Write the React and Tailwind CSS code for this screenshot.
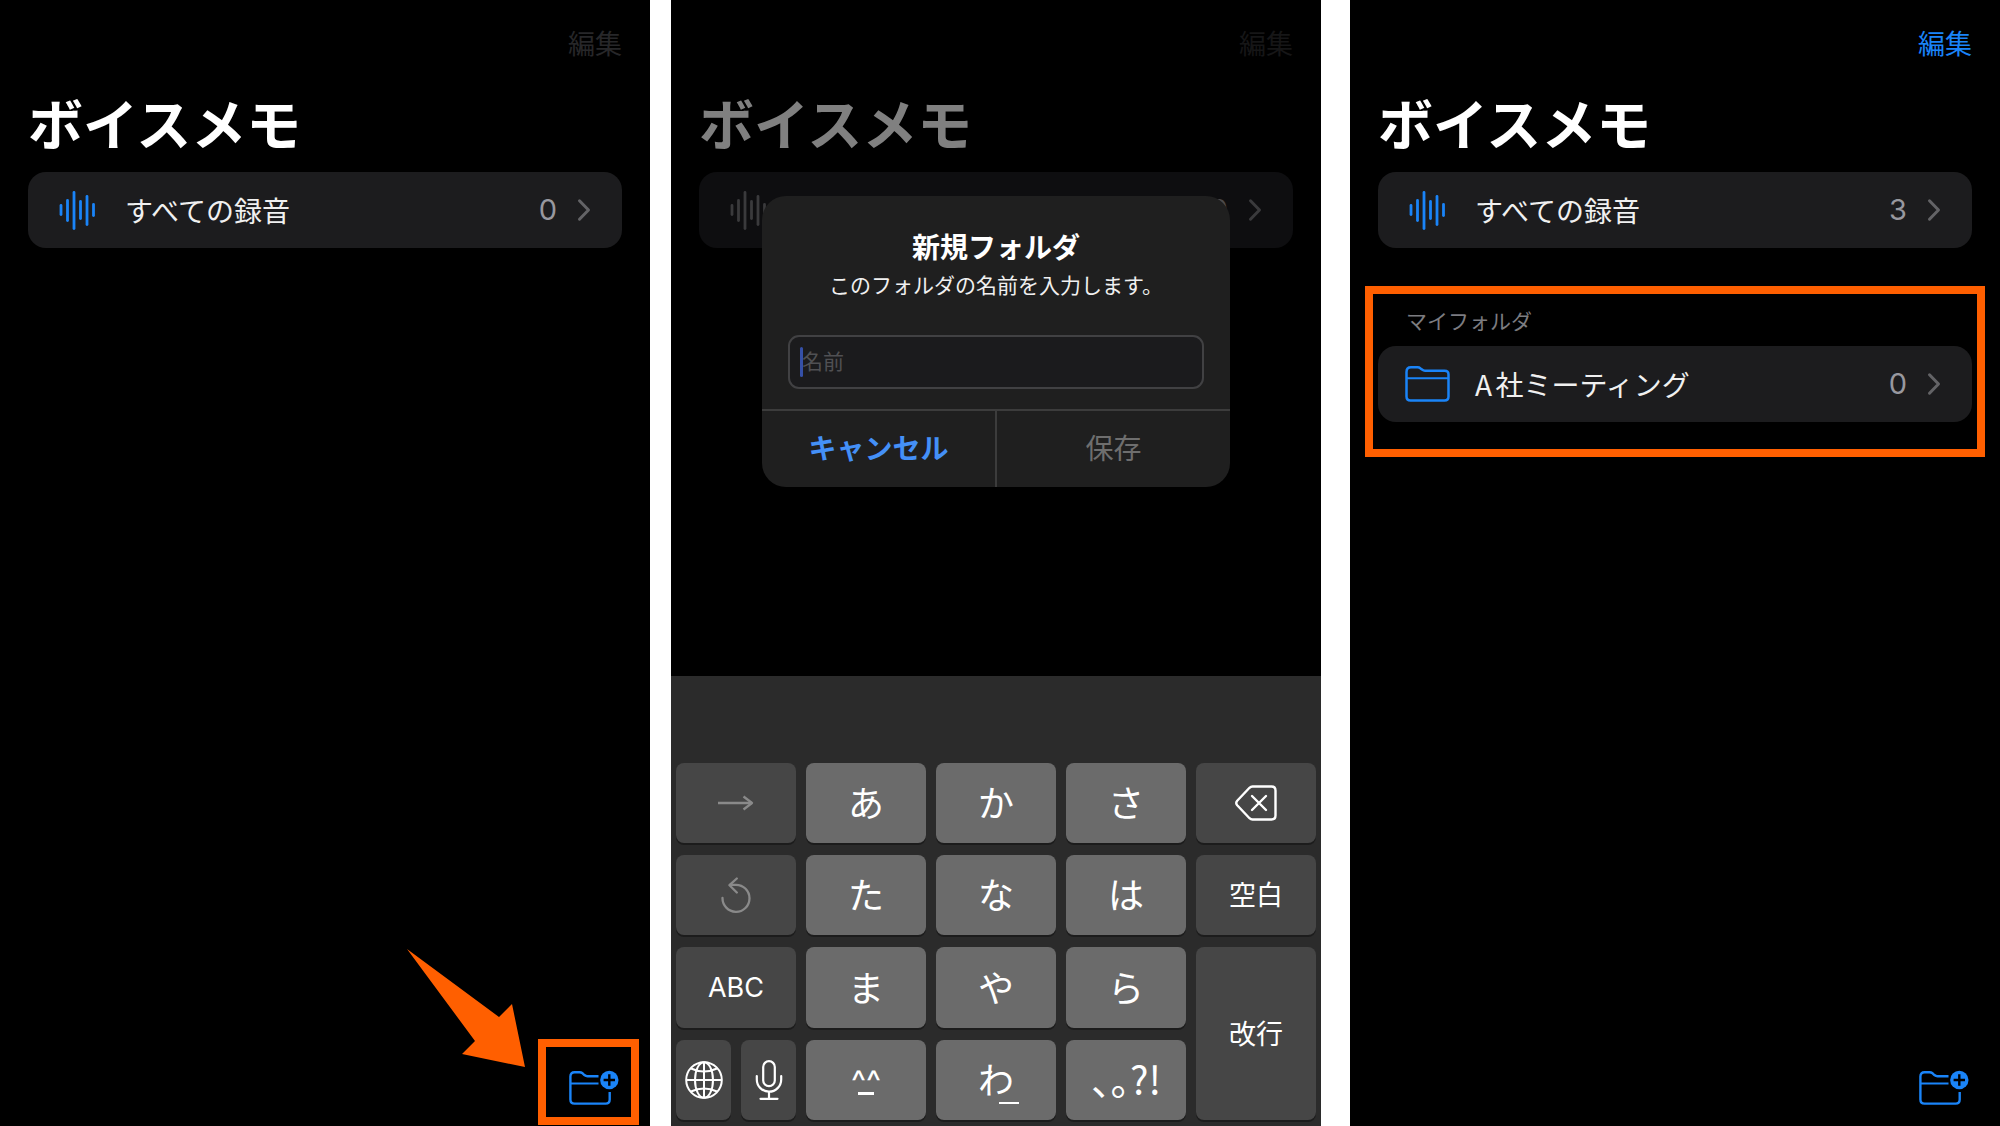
import { useState } from "react";

const WAVE_BARS = [
    { x: 2, top: 15, bottom: 24 },
    { x: 8.5, top: 10, bottom: 30 },
    { x: 15, top: 2, bottom: 38 },
    { x: 21.5, top: 11, bottom: 28 },
    { x: 28, top: 6, bottom: 34 },
    { x: 34.5, top: 14, bottom: 25 },
];

function WaveIcon({ className }) {
    return (
        <svg
            width="36"
            height="40"
            viewBox="0 0 36 39"
            fill="none"
            stroke="currentColor"
            strokeWidth="2.8"
            strokeLinecap="round"
            className={className}
        >
            {WAVE_BARS.map((bar) => (
                <path key={bar.x} d={`M${bar.x} ${bar.top}V${bar.bottom}`} />
            ))}
        </svg>
    );
}

function FolderIcon() {
    return (
        <svg
            width="45"
            height="36"
            viewBox="0 0 45 36"
            fill="none"
            stroke="currentColor"
            strokeWidth="2.5"
            strokeLinejoin="round"
        >
            <path d="M1.5 6V30.5Q1.5 34.5 5.5 34.5H39.5Q43.5 34.5 43.5 30.5V8.5Q43.5 4.8 39.5 4.8H20Q18.5 4.8 17 3.6L15.5 2.4Q14.3 1.3 12.5 1.3H6Q1.5 1.3 1.5 6Z" />
            <path d="M1.5 12.3H43.5" strokeWidth="2" />
        </svg>
    );
}

function FolderPlusIcon() {
    return (
        <svg
            width="50"
            height="36"
            viewBox="0 0 50 36"
            fill="none"
            stroke="currentColor"
            strokeWidth="2.4"
        >
            <path d="M29.5 6.2H18.5Q16.8 6.2 15.4 5L13.6 3.3Q12.2 2.2 10.4 2.2H5.6Q1.4 2.2 1.4 6.4V29.5Q1.4 33.6 5.5 33.6H36.6Q40.7 33.6 40.7 29.5V22" />
            <path d="M1.4 13.5H29.5" strokeWidth="2" />
            <circle cx="40.3" cy="10" r="9.2" fill="currentColor" stroke="none" />
            <path d="M40.3 4.3V15.7M34.6 10H46" stroke="#000" strokeWidth="2.4" />
        </svg>
    );
}

function ChevronIcon() {
    return (
        <svg
            width="14"
            height="24"
            viewBox="0 0 14 24"
            fill="none"
            stroke="currentColor"
            strokeWidth="3"
            strokeLinecap="round"
            strokeLinejoin="round"
        >
            <path d="M2.5 2.8L11.5 12L2.5 21.2" />
        </svg>
    );
}

function ArrowIcon() {
    return (
        <svg width="36" height="16" viewBox="0 0 36 16" fill="none" stroke="currentColor" strokeWidth="2.3">
            <path d="M0 8H34" />
            <path d="M25.5 1.5L34 8L25.5 14.5" strokeLinejoin="round" />
        </svg>
    );
}

function UndoIcon() {
    return (
        <svg
            width="30"
            height="36"
            viewBox="0 0 30 36"
            fill="none"
            stroke="currentColor"
            strokeWidth="2.3"
            strokeLinecap="round"
            strokeLinejoin="round"
        >
            <path d="M1.5 21A13.5 13.5 0 1 0 15 7.8H9" />
            <path d="M15.8 1.5L8.5 8.2L15.8 15.5" />
        </svg>
    );
}

function BackspaceIcon() {
    return (
        <svg
            width="42"
            height="36"
            viewBox="0 0 42 36"
            fill="none"
            stroke="currentColor"
            strokeWidth="2.4"
            strokeLinecap="round"
            strokeLinejoin="round"
        >
            <path d="M17.5 1.5H36.5Q40.5 1.5 40.5 5.5V30.5Q40.5 34.5 36.5 34.5H17.5Q15.8 34.5 14.5 33.2L2.2 20.2Q0.3 18 2.2 15.8L14.5 2.8Q15.8 1.5 17.5 1.5Z" />
            <path d="M17 11L31 25M31 11L17 25" />
        </svg>
    );
}

function GlobeIcon() {
    return (
        <svg width="38" height="38" viewBox="0 0 38 38" fill="none" stroke="currentColor" strokeWidth="2">
            <circle cx="19" cy="19" r="17.8" />
            <ellipse cx="19" cy="19" rx="9" ry="17.8" />
            <path d="M19 1.2V36.8M1.2 19H36.8" />
            <path d="M6 7.5Q19 13.5 32 7.5M6 30.5Q19 24.5 32 30.5" />
        </svg>
    );
}

function MicIcon() {
    return (
        <svg
            width="28"
            height="40"
            viewBox="0 0 28 40"
            fill="none"
            stroke="currentColor"
            strokeWidth="2.2"
            strokeLinecap="round"
        >
            <rect x="8.2" y="1.2" width="11.6" height="25" rx="5.8" />
            <path d="M1.8 16V19.5A12.2 12.2 0 0 0 26.2 19.5V16" />
            <path d="M14 32V38.5M5.5 38.8H22.5" />
        </svg>
    );
}

function Screen({ className = "", children }) {
    return (
        <section className={`relative flex min-w-0 flex-1 flex-col bg-black ${className}`}>
            {children}
        </section>
    );
}

function Header({ editClass, titleClass }) {
    return (
        <header className="px-7">
            <div className="flex h-[86px] items-center justify-end">
                <button type="button" className={`text-[27px] leading-8 ${editClass}`}>
                    編集
                </button>
            </div>
            <h1 className={`h-[86px] text-[55px] leading-[70px] font-bold ${titleClass}`}>
                ボイスメモ
            </h1>
        </header>
    );
}

function FolderRow({ icon, name, count, dimmed = false }) {
    return (
        <button
            type="button"
            className={`flex h-19 w-full items-center rounded-[18px] pr-[31px] pl-[25px] text-left ${
                dimmed ? "bg-[#0e0e10] text-[#3a3a3c]" : "bg-[#1c1c1e] text-[#636366]"
            }`}
        >
            <span
                className={`flex w-12 justify-center ${dimmed ? "text-[#3a3a3c]" : "text-[#1a84f8]"}`}
            >
                {icon}
            </span>
            <span
                className={`ml-6 flex-1 text-[28px] leading-8 [text-autospace:normal] ${
                    dimmed ? "text-[#7a7a7a]" : "text-[#f0f0f0]"
                }`}
            >
                {name}
            </span>
            <span
                className={`mr-5 font-[Inter] text-[29px] leading-8 ${dimmed ? "text-[#4a4a4e]" : "text-[#98989f]"}`}
            >
                {count}
            </span>
            <ChevronIcon />
        </button>
    );
}

function NewFolderDialog() {
    const [name, setName] = useState("");

    return (
        <div
            role="dialog"
            aria-labelledby="dialog-title"
            className="absolute inset-x-[91px] top-49 overflow-hidden rounded-[24px] bg-[#1f1f1f] text-center"
        >
            <div className="px-[26px] pt-8 pb-5">
                <h2 id="dialog-title" className="text-[28px] leading-9 font-bold text-white">
                    新規フォルダ
                </h2>
                <label
                    htmlFor="folder-name"
                    className="block text-[21px] leading-10 text-[#f0f0f0]"
                >
                    このフォルダの名前を入力します。
                </label>

                <div className="relative mt-[31px]">
                    <input
                        id="folder-name"
                        type="text"
                        value={name}
                        onChange={(e) => setName(e.target.value)}
                        placeholder="名前"
                        className="block h-[54px] w-full rounded-[11px] border-2 border-[#414143] bg-[#1b1b1d] px-3 pb-1 text-[21px] text-white outline-none placeholder:text-[#505053]"
                    />
                    <span className="absolute top-3 left-3 h-[30px] w-[3px] rounded-full bg-[#3550a8]" />
                </div>
            </div>

            <div className="flex h-[78px] border-t-2 border-[#3c3c3c]">
                <button
                    type="button"
                    className="flex-1 border-r-2 border-[#3c3c3c] pb-1 text-[28px] font-bold text-[#4490f7]"
                >
                    キャンセル
                </button>
                <button type="button" className="flex-1 pb-1 text-[28px] text-[#6e6e6e]">
                    保存
                </button>
            </div>
        </div>
    );
}

function Key({ dark = false, className = "", label, children }) {
    return (
        <button
            type="button"
            aria-label={label}
            className={`flex min-w-0 flex-col items-center justify-center rounded-lg shadow-[0_2px_0_#1c1c1c] ${
                dark ? "bg-[#464646]" : "bg-[#6b6b6b] pb-1"
            } ${className}`}
        >
            {children}
        </button>
    );
}

function Keyboard() {
    return (
        <div className="mt-auto bg-[#2b2b2b] px-[5px] pt-[87px] pb-[6px] text-white">
            <div className="grid grid-cols-5 grid-rows-[80px_80px_81px_80px] gap-x-[10px] gap-y-3 text-[36px] leading-10">
                <Key dark label="次へ" className="text-[#8a8a8a]">
                    <ArrowIcon />
                </Key>
                <Key>あ</Key>
                <Key>か</Key>
                <Key>さ</Key>
                <Key dark label="削除">
                    <BackspaceIcon />
                </Key>

                <Key dark label="戻す" className="text-[#8a8a8a]">
                    <UndoIcon />
                </Key>
                <Key>た</Key>
                <Key>な</Key>
                <Key>は</Key>
                <Key dark className="pb-[2px] text-[27px]">空白</Key>

                <Key dark className="font-[Inter] text-[27px]">ABC</Key>
                <Key>ま</Key>
                <Key>や</Key>
                <Key>ら</Key>
                <Key dark className="row-span-2 pb-[2px] text-[27px]">改行</Key>

                <div className="grid grid-cols-2 gap-[10px]">
                    <Key dark label="言語">
                        <GlobeIcon />
                    </Key>
                    <Key dark label="音声入力">
                        <MicIcon />
                    </Key>
                </div>
                <Key>
                    <span className="h-[30px] font-[Inter] text-[32px] leading-10">^^</span>
                    <span className="h-[3px] w-4 bg-white" />
                </Key>
                <Key>
                    <span className="relative">
                        わ
                        <span className="absolute -right-[5px] -bottom-[6px] h-[2px] w-5 bg-white" />
                    </span>
                </Key>
                <Key className="text-[39px] [font-feature-settings:'halt']">、。?!</Key>
            </div>
        </div>
    );
}

export default function App() {
    return (
        <main
            lang="ja"
            className="flex min-h-screen bg-white font-['Noto_Sans_CJK_JP',sans-serif]"
        >
            {/* Empty list */}
            <Screen>
                <Header editClass="text-[#272729]" titleClass="text-white" />
                <div className="px-7">
                    <FolderRow icon={<WaveIcon />} name="すべての録音" count={0} />
                </div>
                <div className="mt-auto flex justify-end pr-[11px] pb-px">
                    <div className="relative border-8 border-[#ff5f00] pt-[23px] pr-3 pb-[11px] pl-[23px] text-[#1a84f8]">
                        <button type="button" aria-label="新規フォルダ" className="block">
                            <FolderPlusIcon />
                        </button>
                        <svg
                            width="118"
                            height="118"
                            viewBox="0 0 118 118"
                            className="absolute right-full bottom-full -mb-[20px] mr-[21px]"
                        >
                            <path d="M0 0L92 68L105 55L118 118L55 105L68 92Z" fill="#ff5f00" />
                        </svg>
                    </div>
                </div>
            </Screen>

            {/* Naming the folder */}
            <Screen className="ml-[21px]">
                <Header editClass="text-[#161617]" titleClass="text-[#808080]" />
                <div className="px-7">
                    <FolderRow icon={<WaveIcon />} name="すべての録音" count={0} dimmed />
                </div>
                <NewFolderDialog />
                <Keyboard />
            </Screen>

            {/* Folder created */}
            <Screen className="ml-[29px]">
                <Header editClass="text-[#1a84f8]" titleClass="text-white" />
                <div className="px-7">
                    <FolderRow icon={<WaveIcon />} name="すべての録音" count={3} />
                </div>
                <div className="mx-[15px] mt-[38px] border-8 border-[#ff5f00] px-[5px] pt-3 pb-[27px]">
                    <h2 className="h-10 px-7 text-[21px] leading-7 text-[#7c7c80]">
                        マイフォルダ
                    </h2>
                    <FolderRow icon={<FolderIcon />} name="A社ミーティング" count={0} />
                </div>
                <div className="mt-auto flex justify-end pr-[31px] pb-5 text-[#1a84f8]">
                    <button type="button" aria-label="新規フォルダ" className="block">
                        <FolderPlusIcon />
                    </button>
                </div>
            </Screen>
        </main>
    );
}
